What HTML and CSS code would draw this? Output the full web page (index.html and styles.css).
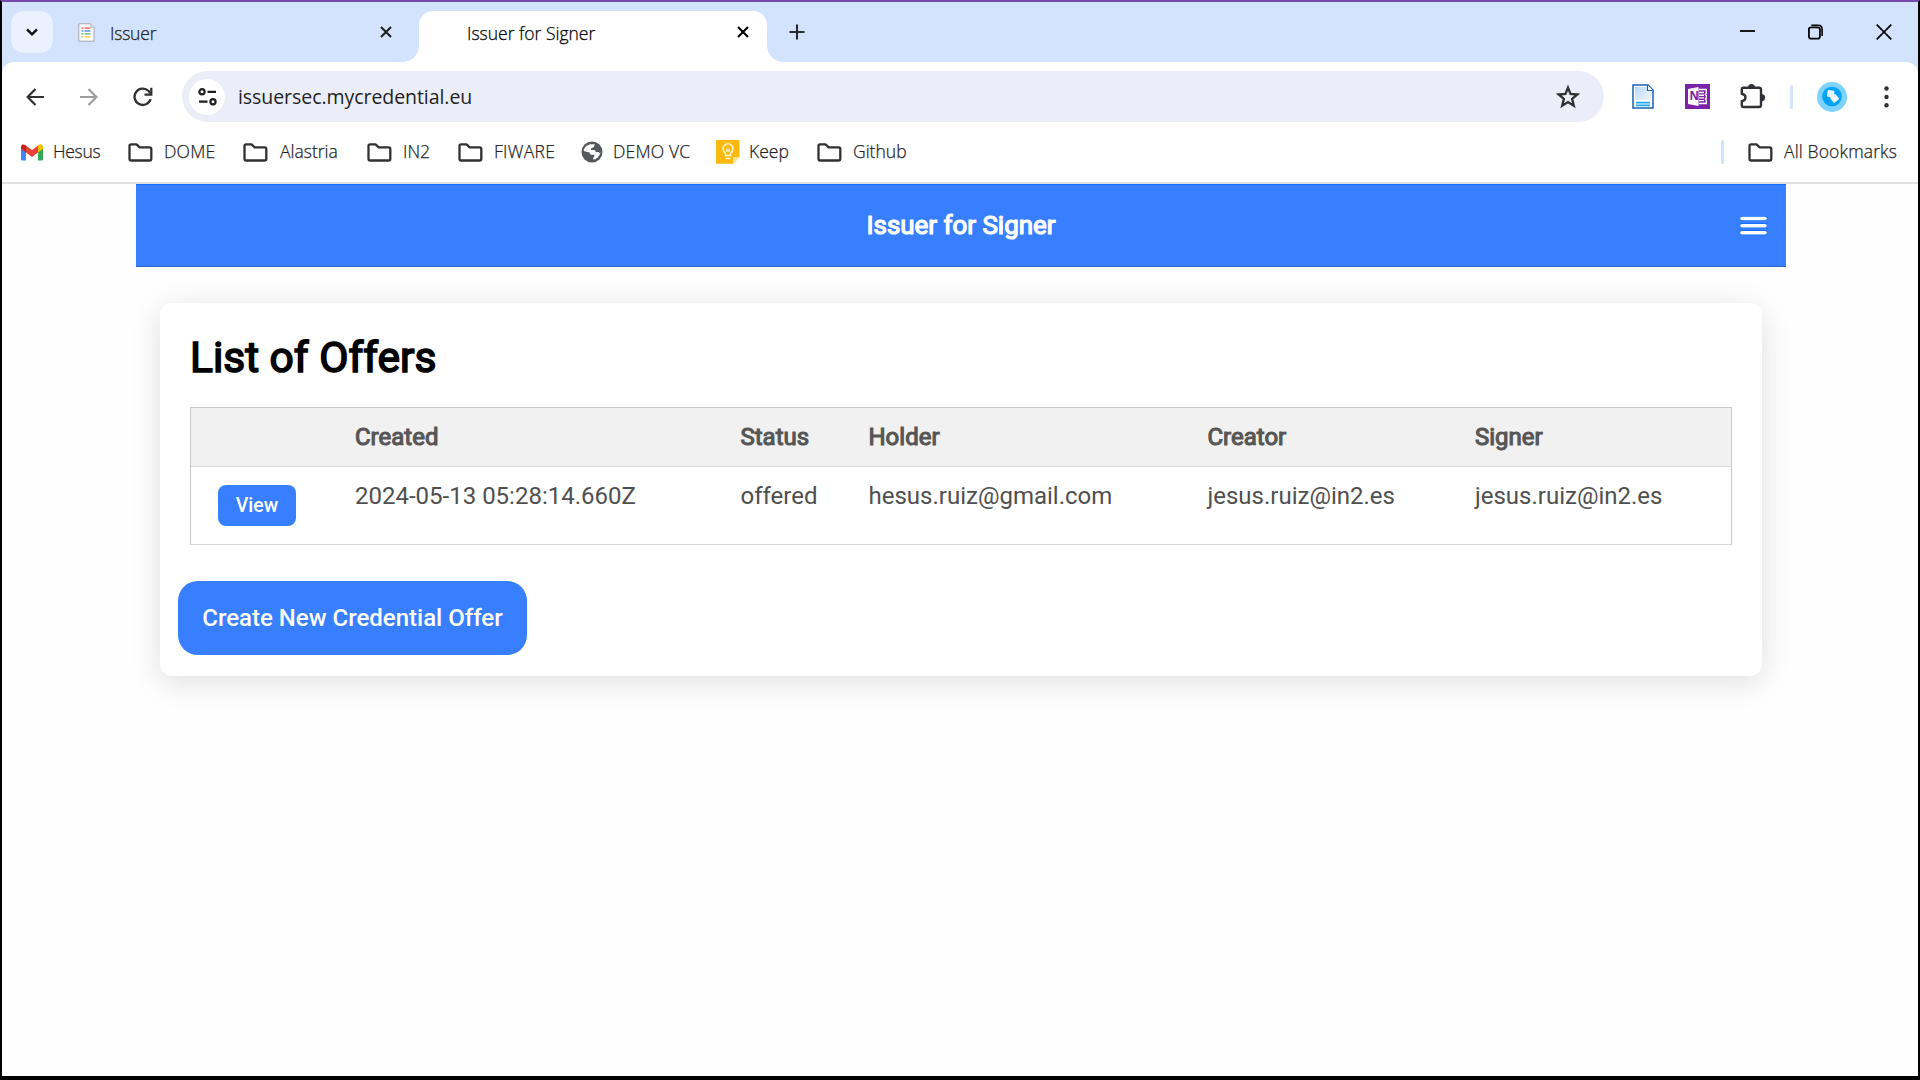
FILE: index.html
```html
<!DOCTYPE html>
<html lang="en">
<head>
<meta charset="utf-8">
<title>Issuer for Signer</title>
<link rel="stylesheet" href="styles.css">
</head>
<body>
<svg width="0" height="0" class="defs">
  <symbol id="folder" viewBox="0 0 25 19"><path d="M1.5 15.5V3q0-1.700 1.700-1.700h5.300l3.200 3h9.900q1.700 0 1.700 1.700v9.800q0 1.700-1.700 1.700H3.200q-1.700 0-1.700-1.700z" fill="none" stroke="#303134" stroke-width="2.300" stroke-linejoin="round"/></symbol>
  <symbol id="cross" viewBox="0 0 12 12"><path d="M1 1l10 10M11 1L1 11" fill="none" stroke="currentColor" stroke-width="2.1"/></symbol>
</svg>
<div class="window">
  <div class="tabstrip">
    <button class="tab-search" aria-label="Search tabs"><svg width="12" height="8" viewBox="0 0 12 8"><path d="M1 1.3l5 5 5-5" fill="none" stroke="#111" stroke-width="2.4"/></svg></button>
    <div class="tab">
      <svg class="favicon" width="17" height="19" viewBox="0 0 17 19"><path d="M.8.8h11.6l3.6 3.6v13.8H.8z" fill="#fff" stroke="#a3a6ab"/><path d="M12.4.8v3.6H16" fill="#ddd" stroke="#b5b7bb" stroke-width=".7"/><g stroke-width="1.3"><path d="M3.5 5.2h2M6.5 5.2h6" stroke="#ea5545"/><path d="M3.5 8h2M6.5 8h6" stroke="#5a93f2"/><path d="M3.5 10.8h2M6.5 10.8h6" stroke="#4fae6a"/><path d="M3.5 13.8h2M6.5 13.8h6" stroke="#fbc02d"/></g></svg>
      <span class="tab-title title-issuer">Issuer</span>
      <svg class="tab-close" width="12" height="12"><use href="#cross"/></svg>
    </div>
    <div class="tab active">
      <span class="tab-title title-signer">Issuer for Signer</span>
      <svg class="tab-close" width="12" height="12"><use href="#cross"/></svg>
    </div>
    <svg class="new-tab" width="16" height="16" viewBox="0 0 16 16"><path d="M8 .5v15M.5 8h15" stroke="#2b2b2b" stroke-width="2.1"/></svg>
    <div class="controls">
      <svg width="15" height="16" viewBox="0 0 15 16"><path d="M0 7h15" stroke="#000" stroke-width="1.8"/></svg>
      <svg width="15" height="16" viewBox="0 0 15 16"><rect x=".9" y="3.4" width="11" height="11.3" rx="2.2" fill="none" stroke="#000" stroke-width="1.8"/><path d="M3.4 1.2h6.8q3.9 0 3.9 3.900v6.800" fill="none" stroke="#000" stroke-width="1.6"/></svg>
      <svg width="16" height="16" viewBox="0 0 16 16"><path d="M.7.7l14.600 14.600M15.300.7L.7 15.300" stroke="#000" stroke-width="1.7"/></svg>
    </div>
  </div>
  <div class="toolbar">
    <svg class="back" width="18" height="18" viewBox="0 0 18 18"><path d="M9.500 1L1.600 9l7.900 8M1.600 9H18" fill="none" stroke="#303134" stroke-width="2.2"/></svg>
    <svg class="forward" width="18" height="18" viewBox="0 0 18 18"><path d="M8.500 1l7.900 8-7.900 8M16.400 9H0" fill="none" stroke="#9c9c9f" stroke-width="2.2"/></svg>
    <svg class="reload" width="20" height="20" viewBox="0 0 20 20"><path d="M17.600 12.200A8.200 8.200 0 1 1 15.600 4l2.200 2.400" fill="none" stroke="#303134" stroke-width="2.3"/><path d="M18.300.8v6.900h-6.800" fill="none" stroke="#303134" stroke-width="2.2"/></svg>
    <div class="omnibox">
      <span class="site-info"><svg width="19" height="18" viewBox="0 0 19 18"><g fill="none" stroke="#1f1f1f" stroke-width="2.2"><circle cx="4" cy="3.8" r="2.6"/><circle cx="15" cy="13.7" r="2.6"/><path d="M9.500 3.800H18M1 13.700h8.500"/></g></svg></span>
      <span class="url">issuersec.mycredential.eu</span>
      <svg class="star" width="24" height="24" viewBox="0 0 24 24"><path d="M12 2.600l2.500 6.400 6.900.5-5.300 4.400 1.700 6.800L12 17l-5.800 3.700 1.700-6.800-5.300-4.400 6.900-.5z" fill="none" stroke="#303134" stroke-width="2.300"/></svg>
    </div>
    <svg class="ext-doc" width="22" height="25" viewBox="0 0 22 25"><defs><linearGradient id="paper" x2="1" y2="1"><stop stop-color="#b9d5fa"/><stop offset="1" stop-color="#f2f8ff"/></linearGradient></defs><path d="M1 1h15l5 5v18H1z" fill="#fff" stroke="#1b61b5" stroke-width="1.5"/><path d="M3 3h12v5h4v8H3z" fill="url(#paper)"/><path d="M15.500 1v5.500H21" fill="#fff" stroke="#1b61b5" stroke-width="1.2"/><path d="M4 18.400h14v3.400H4z" fill="#8fd0f8"/><path d="M4 18.400h14M4 21.600h14" stroke="#23a8f2" stroke-width="1.4"/></svg>
    <svg class="ext-note" width="25" height="25" viewBox="0 0 25 25"><path d="M0 0h25v25H0z" fill="#7b22a8"/><path d="M13.500 5.500h7.800v4l-1 1 1 1v2.500l-1 1 1 1v3.500h-7.800" fill="none" stroke="#fff" stroke-width="1.3"/><path d="M14 8.500h5M14 11.200h5M14 13.900h5M14 16.600h5" stroke="#fff" stroke-width="1.400"/><path d="M3 5L13.500 3v19L3 20z" fill="#fff"/><text x="4.500" y="16.300" class="note-letter">N</text></svg>
    <svg class="ext-puzzle" width="26" height="25" viewBox="0 0 26 25"><path d="M3.500 3.800H19q2 0 2 2V21q0 2-2 2H3.500q-1.700 0-1.700-1.700v-4.100q3.700-.7 3.700-3.700T1.800 9.800V5.500q0-1.700 1.700-1.700z" fill="none" stroke="#303134" stroke-width="2.400"/><path d="M8 3.500a3.500 3.500 0 0 1 7 0M21.500 10a3.600 3.600 0 0 1 0 7.200z" fill="#303134"/></svg>
    <span class="divider"></span>
    <svg class="avatar" width="30" height="30" viewBox="0 0 30 30"><circle cx="15" cy="15" r="15" fill="#7cd3fd"/><circle cx="15" cy="14.500" r="9.800" fill="#04a3f8"/><g fill="#fff" fill-opacity=".93"><rect x="10.300" y="8.300" width="6.800" height="6.800" rx="1" transform="rotate(8 13.700 11.700)"/><rect x="14.200" y="13" width="6.800" height="6.800" rx="1" transform="rotate(-40 17.600 16.400)"/></g></svg>
    <svg class="menu" width="5" height="22" viewBox="0 0 5 22"><g fill="#303134"><circle cx="2.500" cy="2.500" r="2.200"/><circle cx="2.500" cy="11" r="2.200"/><circle cx="2.500" cy="19.300" r="2.200"/></g></svg>
  </div>
  <div class="bookmarks">
    <a class="bm w-hesus"><svg width="22" height="17" viewBox="0 0 22 17"><path d="M0 4v11q0 1.500 1.500 1.500H5V8z" fill="#4285f4"/><path d="M22 4v11q0 1.500-1.500 1.500H17V8z" fill="#34a853"/><path d="M17 3v5.500l5-3.800V3q0-2.500-2.500-2.700-1.200 0-2.500 1z" fill="#fbbc04"/><path d="M5 1.500v7l6 4.500 6-4.500v-7L11 6z" fill="#ea4335"/><path d="M0 3v1.700l5 3.800V1.500Q3 0 1.500.500 0 1.200 0 3z" fill="#c5221f"/></svg><span class="s-hesus">Hesus</span></a>
    <a class="bm w-dome"><svg width="25" height="19"><use href="#folder"/></svg><span class="s-dome">DOME</span></a>
    <a class="bm w-alastria"><svg width="25" height="19"><use href="#folder"/></svg><span>Alastria</span></a>
    <a class="bm w-in2"><svg width="25" height="19"><use href="#folder"/></svg><span>IN2</span></a>
    <a class="bm w-fiware"><svg width="25" height="19"><use href="#folder"/></svg><span class="s-fiware">FIWARE</span></a>
    <a class="bm w-demo"><svg width="22" height="22" viewBox="0 0 22 22"><circle cx="11" cy="11" r="10.500" fill="#54585d"/><path d="M9.500 3.200h4.300q-.3 2.800-2.300 3.600-2 .4-1.800 2.200h3.600q1.500.3 1.500 2h2.700l1.300 1.200q.6-1.200.7-2.200.2 5-4.500 7.800l-2.700.9q-.6-1.800.7-2.900 1.300-1.500-.7-2.100h-2.200q-1.500-.5-1.500-2.300L2.500 10q.3-2.800 3-5.200z" fill="#fff"/></svg><span class="s-demo">DEMO VC</span></a>
    <a class="bm w-keep"><svg width="24" height="24" viewBox="0 0 24 24"><path d="M0 0h23.500v17L17 23.800H0z" fill="#f9b90f"/><path d="M17 17h6.500L17 23.800z" fill="#fde293"/><path d="M9.500 15.500v-2.300Q7 11.300 7 8.700a5 5 0 0 1 10 0q0 2.600-2.500 4.500v2.300zM9.500 18.500h5M11 12V9.500h2V12" fill="none" stroke="#fff3cd" stroke-width="1.500"/></svg><span class="s-keep">Keep</span></a>
    <a class="bm w-github"><svg width="25" height="19"><use href="#folder"/></svg><span>Github</span></a>
    <span class="divider bm-divider"></span>
    <a class="bm all"><svg width="25" height="19"><use href="#folder"/></svg><span class="s-all">All Bookmarks</span></a>
  </div>
  <main class="page">
    <header class="app-bar">
      <span class="app-title">Issuer for Signer</span>
      <svg class="burger" width="27" height="20" viewBox="0 0 27 20"><path d="M1.900 2.500h23.200M1.900 9.700h23.200M1.900 16.800h23.200" stroke="#0a6cff" stroke-width="5" stroke-linecap="round"/><path d="M1.900 2.500h23.200M1.900 9.700h23.200M1.900 16.800h23.200" stroke="#fff" stroke-width="3.500" stroke-linecap="round"/></svg>
    </header>
    <section class="card">
      <h1>List of Offers</h1>
      <table>
        <colgroup><col class="c1"><col class="c2"><col class="c3"><col class="c4"><col class="c5"><col></colgroup>
        <thead><tr><th></th><th>Created</th><th>Status</th><th>Holder</th><th>Creator</th><th>Signer</th></tr></thead>
        <tbody><tr><td class="action"><button class="view">View</button></td><td>2024-05-13 05:28:14.660Z</td><td>offered</td><td>hesus.ruiz@gmail.com</td><td>jesus.ruiz@in2.es</td><td>jesus.ruiz@in2.es</td></tr></tbody>
      </table>
      <button class="create">Create New Credential Offer</button>
    </section>
  </main>
</div>
</body>
</html>
```
FILE: styles.css
```css
* { box-sizing: border-box; }
body { margin: 0; background: #fff; }
svg { display: block; flex: none; }
button { border: 0; padding: 0; flex: none; }
.defs { position: absolute; }

.window {
  display: flex;
  flex-direction: column;
  width: 1920px;
  height: 1080px;
  border: solid #000;
  border-width: 2px 2px 4px;
  border-top-color: #744ba8;
  background: #d3e2fd;
  overflow: hidden;
  font-family: "Open Sans", "Noto Sans", sans-serif;
  color: #1f1f1f;
}

.tabstrip { display: flex; height: 60px; padding: 9px 26px 0 9px; flex: none; }
.tab-search {
  display: flex;
  align-items: center;
  justify-content: center;
  width: 42px;
  height: 42px;
  border-radius: 14px;
  background: #ebf2ff;
}
.tab { display: flex; align-items: center; width: 366px; height: 42px; padding: 0 27px 0 25px; color: #1f1f1f; }
.favicon { margin-right: 15px; }
.tab-title { font-size: 17.5px; font-weight: 300; line-height: 24px; margin-top: 2px; white-space: nowrap; -webkit-text-stroke: .25px; }
.title-issuer { letter-spacing: -.2px; }
.tab-close { margin-left: auto; }
.tab.active {
  position: relative;
  width: 348px;
  height: 51px;
  padding: 0 18px 9px 48px;
  border-radius: 14px 14px 0 0;
  background: #fff;
  color: #000;
}
.tab.active::before, .tab.active::after {
  content: "";
  position: absolute;
  bottom: 0;
  width: 16px;
  height: 16px;
}
.tab.active::before { left: -16px; background: radial-gradient(circle at 0 0, transparent 15.5px, #fff 16px); }
.tab.active::after { right: -16px; background: radial-gradient(circle at 100% 0, transparent 15.5px, #fff 16px); }
.new-tab { margin: 13px 0 0 22px; }
.controls { display: flex; gap: 53px; margin: 13px 0 0 auto; }

.toolbar {
  display: flex;
  align-items: center;
  height: 69px;
  padding-left: 24px;
  border-radius: 12px 12px 0 0;
  background: #fff;
  flex: none;
}
.forward { margin-left: 36px; }
.reload { margin-left: 35px; }
.omnibox {
  display: flex;
  align-items: center;
  width: 1422px;
  height: 51px;
  margin-left: 29px;
  padding: 0 24px 0 7px;
  border-radius: 26px;
  background: #ebeef8;
}
.site-info { display: flex; align-items: center; justify-content: center; width: 36px; height: 36px; border-radius: 50%; background: #fff; }
.url { margin-left: 13px; font-size: 19.5px; white-space: nowrap; letter-spacing: -.06px; }
.star { margin-left: auto; }
.ext-doc { margin-left: 28px; }
.ext-note { margin-left: 31px; }
.note-letter { font: 700 11.5px "Open Sans", sans-serif; fill: #7b22a8; }
.ext-puzzle { margin-left: 30px; }
.divider { width: 3px; height: 24px; border-radius: 2px; background: #d3e2fd; flex: none; }
.toolbar .divider { margin-left: 24px; }
.avatar { margin: 1px 0 0 24px; }
.menu { margin-left: 37px; }

.bookmarks {
  display: flex;
  align-items: center;
  height: 53px;
  padding: 0 19px 9px 19px;
  border-bottom: 2px solid #e1e1e1;
  background: #fff;
  flex: none;
}
.bm { display: flex; align-items: center; gap: 12px; font-size: 17.5px; font-weight: 300; line-height: 24px; white-space: nowrap; -webkit-text-stroke: .25px; }
.bm span { margin-top: -2px; }
.w-hesus { width: 107px; gap: 10px; }
.s-hesus { letter-spacing: -.3px; }
.s-dome { letter-spacing: .2px; }
.s-fiware { letter-spacing: .3px; }
.s-demo { letter-spacing: .2px; }
.w-dome { width: 115px; gap: 11px; }
.w-alastria { width: 124px; }
.w-in2 { width: 91px; gap: 11px; }
.w-fiware { width: 123px; gap: 11px; }
.w-demo { width: 135px; gap: 10px; }
.w-keep { width: 101px; gap: 9px; }
.w-github { gap: 11px; }
.bm-divider { margin-left: auto; }
.all { width: 151px; margin-left: 24px; gap: 11px; }
.s-all { letter-spacing: .15px; }

.page { flex: 1; background: #fefefe; }
.app-bar {
  display: grid;
  grid-template-columns: 1fr auto 1fr;
  align-items: center;
  width: 1650px;
  height: 83px;
  margin-left: 134px;
  padding: 0 19px;
  border-top: 1px solid #0d70ff;
  border-bottom: 1px solid #2c68cf;
  background: #387fff;
  font-family: Roboto, sans-serif;
  color: #fff;
}
.app-title { grid-column: 2; font-size: 25.9px; line-height: 30px; margin-top: -2px; -webkit-text-stroke: 1.2px; }
.burger { justify-self: end; }
.card {
  width: 1602px;
  height: 373px;
  margin: 36px 0 0 158px;
  padding: 29px 30px 0;
  border-radius: 12px;
  background: #fff;
  box-shadow: 0 6px 30px rgba(0, 0, 0, .13);
  font-family: Roboto, sans-serif;
}
h1 { margin: 0; height: 75px; font-size: 42.5px; font-weight: 400; line-height: 51px; color: #000; -webkit-text-stroke: 1.6px; }
table { width: 1542px; table-layout: fixed; border-collapse: separate; border-spacing: 0; border: 1px solid #c8c8c8; border-bottom: 0; font-size: 24px; color: #4f4f4f; }
.c1 { width: 137px; }
.c2 { width: 385.5px; }
.c3 { width: 128px; }
.c4 { width: 339px; }
.c5 { width: 267.5px; }
th, td { padding: 11px 0 0 27px; border-bottom: 1px solid #d8d8d8; text-align: left; vertical-align: top; line-height: 36px; white-space: nowrap; }
th { height: 59px; background: #f1f1f1; font-weight: 400; color: #565656; -webkit-text-stroke: 1.1px; }
td { height: 78px; }
td.action { padding-top: 18px; }
.view { display: block; width: 78px; height: 41px; border-radius: 8px; background: #387fff; color: #fff; font: 500 19.5px Roboto, sans-serif; }
.create { display: block; width: 349px; height: 74px; margin: 36px 0 0 -12px; border-radius: 20px; background: #387fff; color: #fff; font: 500 24px Roboto, sans-serif; }
```
